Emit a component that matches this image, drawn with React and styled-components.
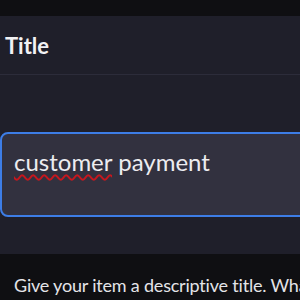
import styled, { createGlobalStyle } from 'styled-components';

const Global = createGlobalStyle`
  html, body {
    margin: 0;
    padding: 0;
    background: #0f0f12;
    font-family: Lato, "Noto Sans", sans-serif;
    overflow: hidden;
  }
`;

const Page = styled.div`
  width: 300px;
  height: 300px;
  display: flex;
  flex-direction: column;
  padding-top: 16px;
  box-sizing: border-box;
  overflow: hidden;
`;

const Panel = styled.div`
  background: #1f1f2a;
  height: 238px;
  flex-shrink: 0;
  display: flex;
  flex-direction: column;
`;

const Header = styled.div`
  height: 58px;
  border-bottom: 1px solid #2c2c3a;
  display: flex;
  align-items: center;
  padding-left: 5px;
  font-size: 22px;
  font-weight: 700;
  color: #f2f2f4;
`;

const Body = styled.div`
  padding-top: 57px;
`;

const Input = styled.div`
  height: 85px;
  margin-right: -20px;
  border: 2px solid #3d7de6;
  border-radius: 8px;
  background: #32313f;
  padding: 13px 0 0 12px;
  box-sizing: border-box;
  font-size: 24px;
  color: #ececf0;
  white-space: nowrap;
`;

const Misspelled = styled.span`
  text-decoration: underline wavy #c8161d;
  text-underline-offset: 3px;
  text-decoration-thickness: 1.5px;
`;

const Help = styled.div`
  padding: 20px 0 0 14px;
  font-size: 18px;
  letter-spacing: -0.2px;
  color: #e4e4e8;
  white-space: nowrap;
  overflow: hidden;
`;

const App = () => {
  return (
    <Page>
      <Global />
      <Panel>
        <Header>Title</Header>
        <Body>
          <Input>
            <Misspelled>customer</Misspelled> payment
          </Input>
        </Body>
      </Panel>
      <Help>Give your item a descriptive title. What is it about?</Help>
    </Page>
  );
};

export default App;
